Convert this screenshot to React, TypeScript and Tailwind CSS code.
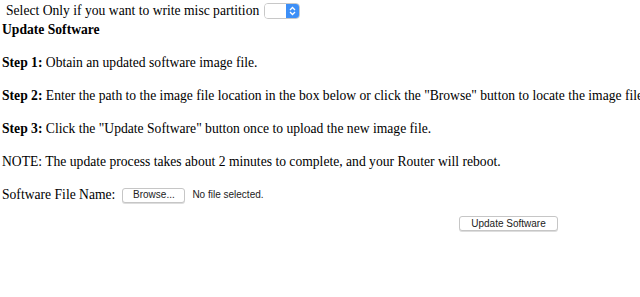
export default function App() {
  return (
    <div className="w-[640px] h-[297px] overflow-hidden bg-white text-black font-['Liberation_Serif',serif] text-[13.62px] leading-[16px]">
      <div className="flex items-center pl-[6px] pt-[3px] h-[18px] whitespace-nowrap">
        <span>Select Only if you want to write misc partition</span>
        <div className="ml-[5px] flex h-[16px] w-[36px] rounded-[4px] border border-[#c8c8c8] overflow-hidden">
          <div className="flex-1 bg-white" />
          <div className="w-[13px] bg-[#3d8ff7] flex flex-col items-center justify-center">
            <svg width="7" height="10" viewBox="0 0 7 10" fill="none" stroke="white" strokeWidth="1.3">
              <path d="M1 4 L3.5 1.5 L6 4" />
              <path d="M1 6 L3.5 8.5 L6 6" />
            </svg>
          </div>
        </div>
      </div>
      <div className="font-bold pl-[2px] mt-[4px] whitespace-nowrap">Update Software</div>
      <div className="pl-[2px] whitespace-nowrap">
        <p className="mt-[17px]"><b>Step 1:</b> Obtain an updated software image file.</p>
        <p className="mt-[17px]"><b>Step 2:</b> Enter the path to the image file location in the box below or click the "Browse" button to locate the image file.</p>
        <p className="mt-[17px]"><b>Step 3:</b> Click the "Update Software" button once to upload the new image file.</p>
        <p className="mt-[17px]">NOTE: The update process takes about 2 minutes to complete, and your Router will reboot.</p>
        <div className="mt-[15px] flex items-center h-[20px]">
          <span>Software File Name:</span>
          <button className="ml-[7px] h-[15px] w-[63px] rounded-[3px] border border-[#c6c6c6] bg-white font-['Liberation_Sans',sans-serif] text-[10px] leading-none text-[#222] shadow-[0_1px_0_#ddd]">Browse...</button>
          <span className="ml-[7px] font-['Liberation_Sans',sans-serif] text-[10px] text-[#222]">No file selected.</span>
        </div>
      </div>
      <div className="flex justify-end pr-[82px] mt-[11px]">
        <button className="h-[15px] w-[99px] rounded-[3px] border border-[#c6c6c6] bg-white font-['Liberation_Sans',sans-serif] text-[10px] leading-none text-[#222] shadow-[0_1px_0_#ddd]">Update Software</button>
      </div>
    </div>
  );
}
